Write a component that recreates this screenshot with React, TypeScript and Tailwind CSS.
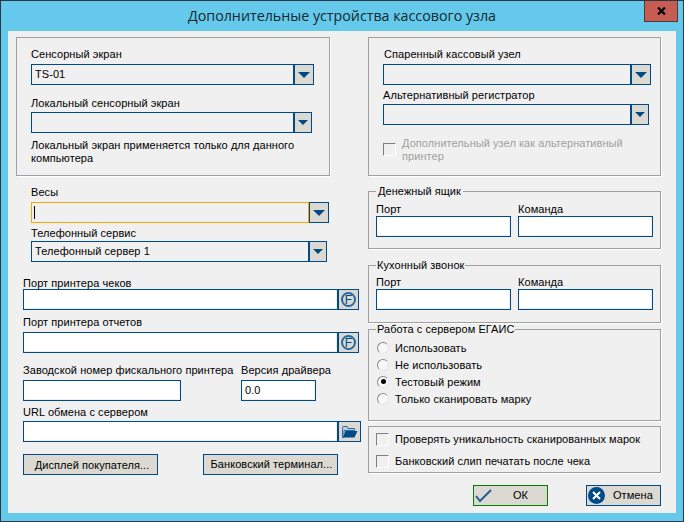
const blue = 'border border-[#004b87]';

function Arrow({ big }: { big?: boolean }) {
  return (
    <svg width={big ? 12 : 10} height={big ? 6 : 5} viewBox="0 0 12 6" className="block">
      <polygon points="0,0 12,0 6,6" fill="#004b87" />
    </svg>
  );
}

function Label({ children, className = '' }: { children: React.ReactNode; className?: string }) {
  return <div className={`h-[14px] leading-[14px] whitespace-nowrap ${className}`}>{children}</div>;
}

function Combo({ editW, btnW, children, className = '' }: { editW: string; btnW: string; children?: React.ReactNode; className?: string }) {
  return (
    <div className={`flex h-[21px] ${className}`}>
      <div className={`${editW} ${blue} flex items-center pl-[3px] bg-[#f0f0f0]`}>{children}</div>
      <div className={`${btnW} ${blue} flex items-center justify-center bg-[#dcd9d2]`}>
        <Arrow big={btnW === 'w-[20px]'} />
      </div>
    </div>
  );
}

function Edit({ className = '', children }: { className?: string; children?: React.ReactNode }) {
  return (
    <div className={`h-[21px] ${blue} flex items-center pl-[3px] bg-white shadow-[inset_-1px_-1px_0_#f0f0f0] ${className}`}>
      {children}
    </div>
  );
}

function FButton() {
  return (
    <div className={`w-[21px] h-[21px] ${blue} flex items-center justify-center bg-[#dcd9d2]`}>
      <div className="w-[15px] h-[15px] rounded-full border-2 border-[#2a6a9e] flex items-center justify-center text-[12px] leading-none text-[#004b87]">
        F
      </div>
    </div>
  );
}

function PortField({ className = '' }: { className?: string }) {
  return (
    <div className={`flex ${className}`}>
      <Edit className="w-[315px]" />
      <FButton />
    </div>
  );
}

function PortGroup({ title, legendPad, top, className = '' }: { title: string; legendPad: string; top: string; className?: string }) {
  return (
    <fieldset className={`h-[64px] border border-[#a0a0a0] shadow-[1px_1px_0_#fff] px-[7px] ${className}`}>
      <legend className={`${legendPad} h-[13px] leading-[13px]`}>{title}</legend>
      <div className={`flex gap-[7px] ${top}`}>
        <div>
          <Label>Порт</Label>
          <Edit className="w-[135px]" />
        </div>
        <div>
          <Label>Команда</Label>
          <Edit className="w-[135px]" />
        </div>
      </div>
    </fieldset>
  );
}

function Radio({ label, checked }: { label: string; checked?: boolean }) {
  return (
    <div className="flex items-center h-[17px]">
      <div className="w-[12px] h-[12px] rounded-full border border-t-[#8a8a8a] border-l-[#8a8a8a] border-r-[#e4e4e4] border-b-[#e4e4e4] bg-[#f8f8f8] flex items-center justify-center">
        {checked && <div className="w-[5px] h-[5px] rounded-full bg-black" />}
      </div>
      <span className="ml-[6px] pt-px">{label}</span>
    </div>
  );
}

function Check({ label, className = '' }: { label: string; className?: string }) {
  return (
    <div className={`flex items-center h-[14px] ${className}`}>
      <div className="w-[13px] h-[13px] border border-t-[#808080] border-l-[#808080] border-r-white border-b-white bg-[#f0f0f0]" />
      <span className="ml-[6px] whitespace-nowrap">{label}</span>
    </div>
  );
}

function Folder() {
  return (
    <svg width="16" height="12" viewBox="0 0 16 12">
      <path d="M0.5 1.5 L0.5 11.5 L2 11.5 L2 4.5 L12.5 4.5 L12.5 2.5 L6 2.5 L5 0.5 L1 0.5 Z" fill="#bcd0e0" stroke="#2a6a9e" strokeWidth="1" />
      <path d="M3.5 5 L15.5 5 L12.5 11.5 L1 11.5 Z" fill="#004b87" />
    </svg>
  );
}

export default function App() {
  return (
    <div className="relative w-[684px] h-[522px] bg-[#65c9eb] border border-[#2b3a42] px-[7px] text-[11px] tracking-[0.06px] text-black font-['Liberation_Sans',sans-serif] overflow-hidden">
      {/* title bar */}
      <div className="h-[30px] flex items-center justify-center tracking-normal text-[14.25px] text-[#14282f] font-['Open_Sans',sans-serif]">
        Дополнительные устройства кассового узла
      </div>
      <div className="absolute -top-px right-[5px] w-[34px] h-[22px] bg-[#c75c52] border border-[#4a3a3a] flex items-center justify-center">
        <svg width="9" height="8" viewBox="0 0 9 8">
          <path d="M1 0.5 L8 7.5 M8 0.5 L1 7.5" stroke="#000" strokeWidth="2.2" />
        </svg>
      </div>

      {/* client area */}
      <div className="h-[482px] bg-[#f0f0f0] pt-[6px] pl-[8px] flex">
        {/* left column */}
        <div className="w-[345px]">
          <div className="w-[314px] h-[139px] border border-[#a0a0a0] shadow-[1px_1px_0_#fff] pt-[9px] pl-[14px]">
            <Label>Сенсорный экран</Label>
            <Combo editW="w-[263px]" btnW="w-[20px]" className="mt-[3px]">TS-01</Combo>
            <Label className="mt-[11px]">Локальный сенсорный экран</Label>
            <Combo editW="w-[263px]" btnW="w-[18px]" className="mt-[2px]" />
            <div className="mt-[6px] leading-[13px] w-[280px]">Локальный экран применяется только для данного компьютера</div>
          </div>

          <div className="ml-[15px] mt-[9px]">
            <Label>Весы</Label>
            <div className="flex h-[21px] mt-[3px]">
              <div className="w-[278px] border border-[#f5a800] bg-[#f0f0f0] flex items-center pl-[2px]">
                <div className="w-px h-[13px] bg-black" />
              </div>
              <div className={`w-[20px] ${blue} flex items-center justify-center bg-[#dcd9d2]`}>
                <Arrow big />
              </div>
            </div>
            <Label className="mt-[3px]">Телефонный сервис</Label>
            <Combo editW="w-[278px]" btnW="w-[18px]" className="mt-px">Телефонный сервер 1</Combo>
          </div>

          <div className="ml-[7px]">
            <Label className="mt-[14px]">Порт принтера чеков</Label>
            <PortField className="-mt-px" />
            <Label className="mt-[5px]">Порт принтера отчетов</Label>
            <PortField className="mt-[3px]" />

            <div className="flex mt-[10px]">
              <div className="w-[218px]">
                <Label>Заводской номер фискального принтера</Label>
                <Edit className="w-[158px] mt-[3px]" />
              </div>
              <div>
                <Label>Версия драйвера</Label>
                <Edit className="w-[75px] mt-[3px]">0.0</Edit>
              </div>
            </div>

            <Label className="mt-[4px]">URL обмена с сервером</Label>
            <div className="flex mt-[2px]">
              <Edit className="w-[315px]" />
              <div className={`w-[23px] h-[21px] ${blue} flex items-center justify-center bg-[#dcd9d2]`}>
                <Folder />
              </div>
            </div>

            <div className="flex gap-[45px] mt-[12px]">
              <button className={`w-[135px] h-[21px] ${blue} bg-[#dcd9d2] pt-px pl-[3px] whitespace-nowrap`}>Дисплей покупателя...</button>
              <button className={`w-[135px] h-[21px] ${blue} bg-[#dcd9d2] pl-[2px] whitespace-nowrap`}>Банковский терминал...</button>
            </div>
          </div>
        </div>

        {/* right column */}
        <div className="ml-[7px] w-[293px]">
          <div className="h-[139px] border border-[#a0a0a0] shadow-[1px_1px_0_#fff] pt-[9px] pl-[14px]">
            <Label className="ml-px">Спаренный кассовый узел</Label>
            <Combo editW="w-[248px]" btnW="w-[20px]" className="mt-[3px]" />
            <Label className="mt-[3px]">Альтернативный регистратор</Label>
            <Combo editW="w-[248px]" btnW="w-[18px]" className="mt-[2px]" />
            <div className="flex mt-[12px] text-[#a0a0a0]">
              <div className="w-[13px] h-[13px] mt-[6px] shrink-0 border border-t-[#808080] border-l-[#808080] border-r-white border-b-white bg-[#f0f0f0]" />
              <div className="ml-[6px] w-[250px] leading-[13px]">Дополнительный узел как альтернативный принтер</div>
            </div>
          </div>

          <PortGroup title="Денежный ящик" legendPad="px-[2px]" top="mt-[4px]" className="mt-[9px]" />
          <PortGroup title="Кухонный звонок" legendPad="px-[1px]" top="mt-[3px]" className="mt-[10px]" />

          <fieldset className="h-[98px] border border-[#a0a0a0] shadow-[1px_1px_0_#fff] pl-[8px]">
            <legend className="-ml-px px-[1px] h-[13px] leading-[13px]">Работа с сервером ЕГАИС</legend>
            <div className="mt-[3px]">
              <Radio label="Использовать" />
              <Radio label="Не использовать" />
              <Radio label="Тестовый режим" checked />
              <Radio label="Только сканировать марку" />
            </div>
          </fieldset>

          <div className="mt-[5px] h-[47px] border border-[#a0a0a0] shadow-[1px_1px_0_#fff] pl-[7px] pt-[5px]">
            <Check label="Проверять уникальность сканированных марок" />
            <Check label="Банковский слип печатать после чека" className="mt-[8px]" />
          </div>

          <div className="flex gap-[38px] mt-[12px] pl-[105px]">
            <button className="w-[75px] h-[21px] border border-[#008000] bg-[#dcd9d2] flex items-center pl-px">
              <svg width="17" height="14" viewBox="0 0 17 14" className="shrink-0">
                <path d="M1 7 L5 12 L16 1" fill="none" stroke="#1f5f96" strokeWidth="2" />
              </svg>
              <span className="ml-[21px]">ОК</span>
            </button>
            <button className={`w-[75px] h-[21px] ${blue} bg-[#dcd9d2] flex items-center pl-px`}>
              <div className="w-[17px] h-[17px] rounded-full bg-[#004b87] flex items-center justify-center shrink-0">
                <svg width="9" height="9" viewBox="0 0 9 9">
                  <path d="M1 1 L8 8 M8 1 L1 8" stroke="#fff" strokeWidth="2" />
                </svg>
              </div>
              <span className="ml-[8px]">Отмена</span>
            </button>
          </div>
        </div>
      </div>
    </div>
  );
}
